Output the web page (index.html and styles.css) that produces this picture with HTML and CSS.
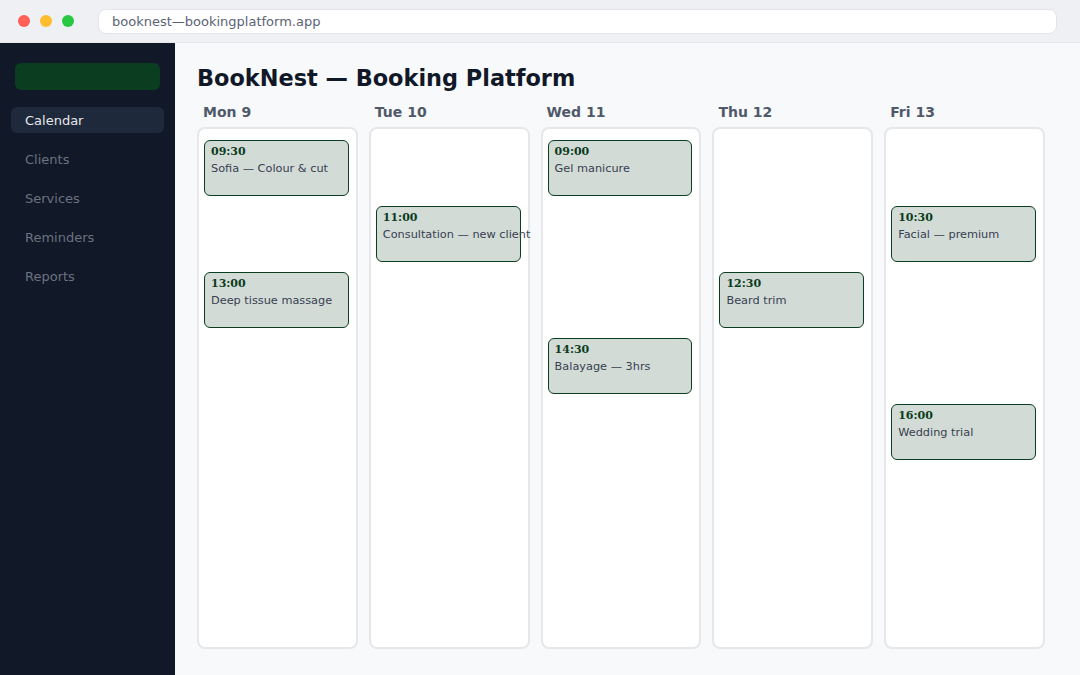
FILE: index.html
```html
<!DOCTYPE html>
<html lang="en">
<head>
<meta charset="UTF-8">
<meta name="viewport" content="width=device-width, initial-scale=1.0">
<title>BookNest</title>
<link rel="stylesheet" href="styles.css">
</head>
<body>

<!-- Browser chrome -->
<div class="chrome">
    <div class="dots">
        <span class="dot red"></span>
        <span class="dot yellow"></span>
        <span class="dot green"></span>
    </div>
    <div class="url">booknest—bookingplatform.app</div>
</div>

<div class="app">
    <!-- Sidebar -->
    <nav class="sidebar">
        <div class="logo"></div>
        <a class="nav-item active">Calendar</a>
        <a class="nav-item">Clients</a>
        <a class="nav-item">Services</a>
        <a class="nav-item">Reminders</a>
        <a class="nav-item">Reports</a>
    </nav>

    <!-- Main -->
    <main class="main">
        <h1>BookNest — Booking Platform</h1>
        <div class="week">
            <div class="day">
                <div class="day-name">Mon 9</div>
                <div class="day-col">
                    <div class="event" style="grid-row: 1;"><b>09:30</b><span>Sofia — Colour &amp; cut</span></div>
                    <div class="event" style="grid-row: 3;"><b>13:00</b><span>Deep tissue massage</span></div>
                </div>
            </div>
            <div class="day">
                <div class="day-name">Tue 10</div>
                <div class="day-col">
                    <div class="event" style="grid-row: 2;"><b>11:00</b><span>Consultation — new client</span></div>
                </div>
            </div>
            <div class="day">
                <div class="day-name">Wed 11</div>
                <div class="day-col">
                    <div class="event" style="grid-row: 1;"><b>09:00</b><span>Gel manicure</span></div>
                    <div class="event" style="grid-row: 4;"><b>14:30</b><span>Balayage — 3hrs</span></div>
                </div>
            </div>
            <div class="day">
                <div class="day-name">Thu 12</div>
                <div class="day-col">
                    <div class="event" style="grid-row: 3;"><b>12:30</b><span>Beard trim</span></div>
                </div>
            </div>
            <div class="day">
                <div class="day-name">Fri 13</div>
                <div class="day-col">
                    <div class="event" style="grid-row: 2;"><b>10:30</b><span>Facial — premium</span></div>
                    <div class="event" style="grid-row: 5;"><b>16:00</b><span>Wedding trial</span></div>
                </div>
            </div>
        </div>
    </main>
</div>

</body>
</html>
```

FILE: styles.css
```css
* {
    box-sizing: border-box;
}
body {
    font-family: "DejaVu Sans", sans-serif;
    margin: 0;
    padding: 0;
    width: 1080px;
    height: 675px;
    overflow: hidden;
    background-color: #f8f9fb;
}
.chrome {
    display: flex;
    align-items: center;
    height: 43px;
    padding: 0 23px 0 18px;
    background-color: #eff0f3;
    border-bottom: 1px solid #e6e8ec;
}
.dots {
    display: flex;
    gap: 10px;
    margin-right: 24px;
}
.dot {
    width: 12px;
    height: 12px;
    border-radius: 50%;
}
.red { background-color: #ff5f57; }
.yellow { background-color: #febc2e; }
.green { background-color: #28c840; }
.url {
    flex: 1;
    height: 25px;
    padding: 0 13px;
    line-height: 23px;
    font-size: 13px;
    color: #5b6373;
    background-color: #fff;
    border: 1px solid #e3e5ea;
    border-radius: 8px;
}
.app {
    display: flex;
    height: 632px;
}
.sidebar {
    width: 175px;
    flex-shrink: 0;
    background-color: #111827;
    padding: 20px 11px;
    display: flex;
    flex-direction: column;
    gap: 13px;
}
.logo {
    height: 27px;
    margin: 0 4px 4px;
    background-color: #0b3d20;
    border-radius: 6px;
}
.nav-item {
    display: block;
    height: 26px;
    line-height: 27px;
    padding: 0 14px;
    font-size: 13px;
    color: #6b7280;
    border-radius: 6px;
}
.nav-item.active {
    color: #e5e7eb;
    background-color: #1e293b;
}
.main {
    flex: 1;
    min-width: 0;
    padding: 21px 35px 26px 22px;
    display: flex;
    flex-direction: column;
}
h1 {
    margin: 0 0 12px;
    font-size: 22.4px;
    line-height: 28px;
    color: #111827;
}
.week {
    flex: 1;
    display: grid;
    grid-template-columns: repeat(5, minmax(0, 1fr));
    gap: 11px;
}
.day {
    display: flex;
    flex-direction: column;
    min-width: 0;
}
.day-name {
    padding: 0 6px;
    height: 20px;
    margin-bottom: 3px;
    font-size: 14px;
    font-weight: bold;
    color: #4f5969;
}
.day-col {
    flex: 1;
    display: grid;
    grid-template-columns: minmax(0, 1fr);
    grid-template-rows: repeat(5, 56px);
    row-gap: 10px;
    align-content: start;
    padding: 11px 7px 0 5px;
    background-color: #fff;
    border: 2px solid #e5e7eb;
    border-radius: 8px;
}
.event {
    display: flex;
    flex-direction: column;
    gap: 4px;
    min-width: 0;
    padding: 4px 6px;
    background-color: #d3dbd6;
    border: 1.5px solid #0b3d20;
    border-radius: 6px;
    white-space: nowrap;
}
.event b {
    font-family: "DejaVu Serif", serif;
    font-size: 11px;
    color: #0b3d20;
}
.event span {
    font-size: 11.3px;
    color: #374151;
}
```
